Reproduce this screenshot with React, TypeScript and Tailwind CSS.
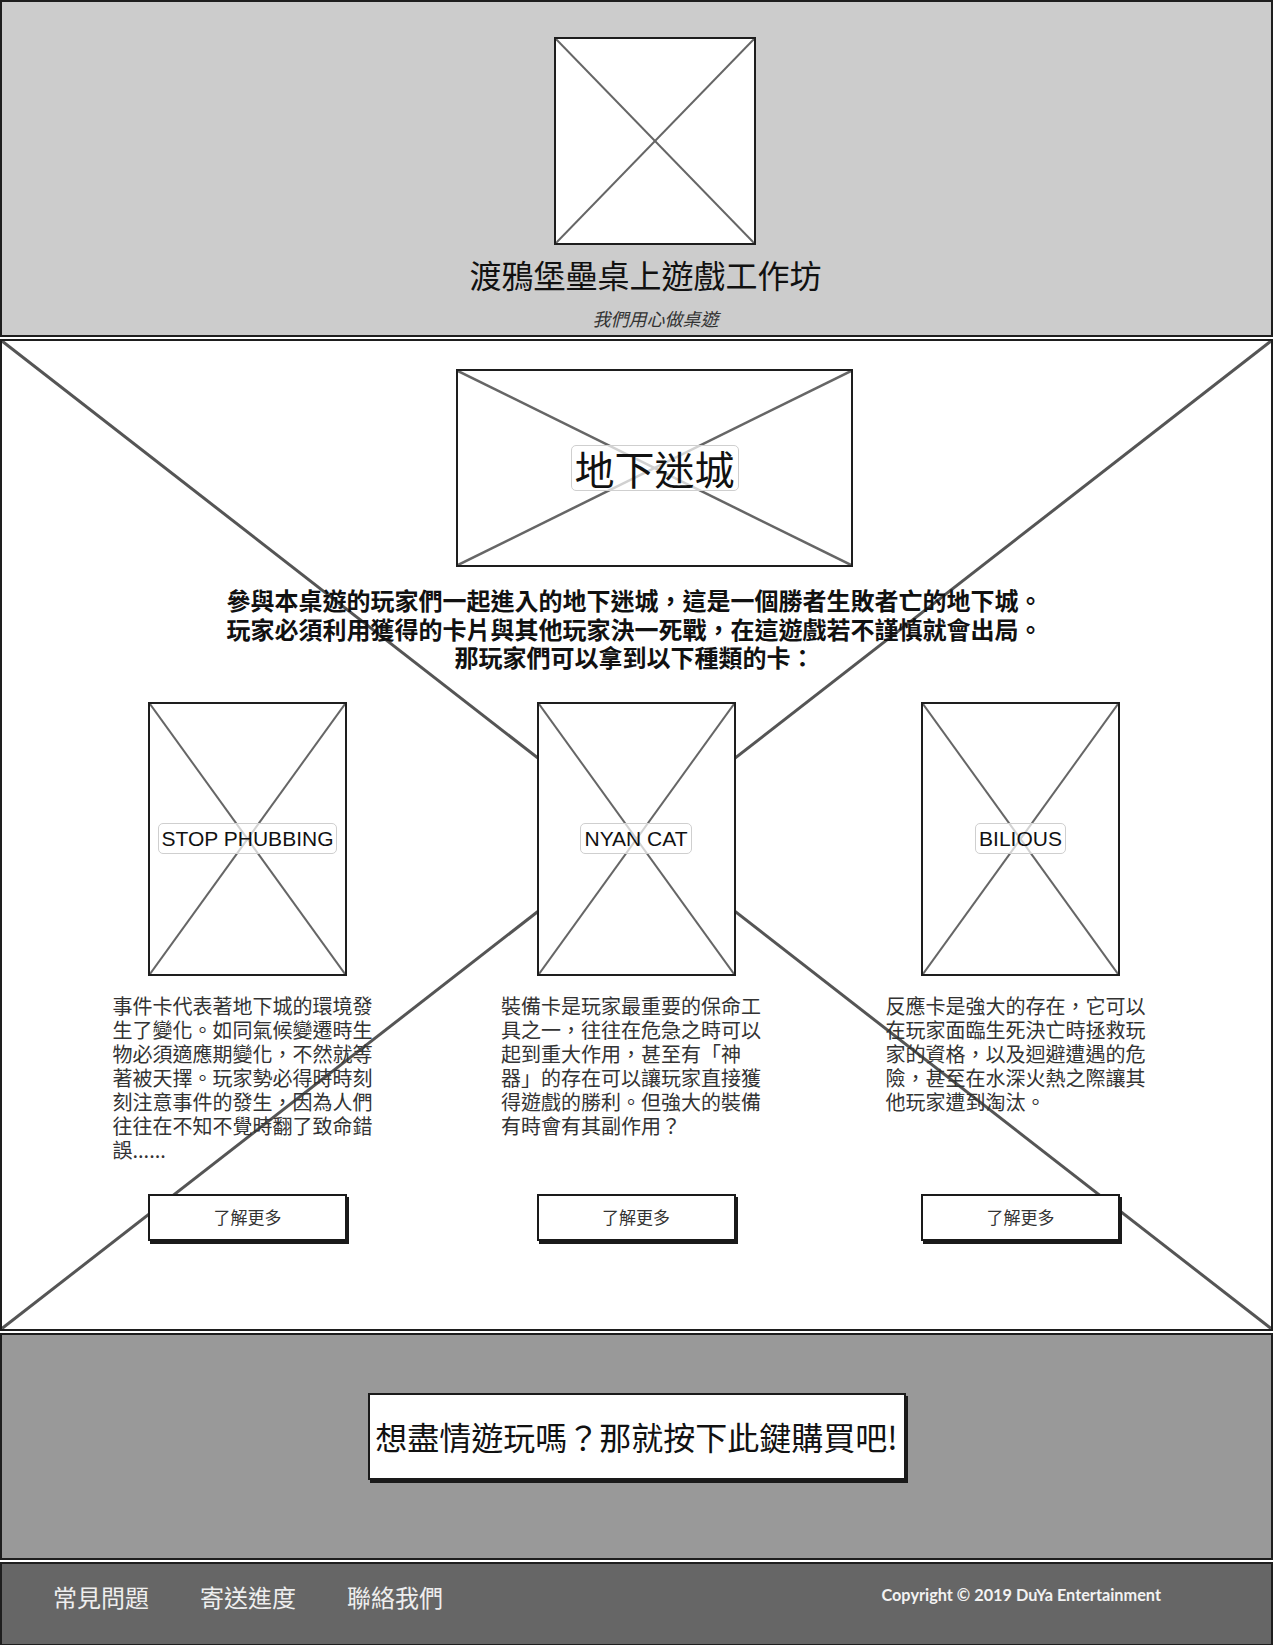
import React from "react";

const cjk = "font-['Noto_Sans_CJK_TC','Noto_Sans_CJK_SC',sans-serif]";

type Card = { label: string; lines: string[] };

const cards: Card[] = [
  {
    label: "STOP PHUBBING",
    lines: [
      "事件卡代表著地下城的環境發",
      "生了變化。如同氣候變遷時生",
      "物必須適應期變化，不然就等",
      "著被天擇。玩家勢必得時時刻",
      "刻注意事件的發生，因為人們",
      "往往在不知不覺時翻了致命錯",
      "誤......",
    ],
  },
  {
    label: "NYAN CAT",
    lines: [
      "裝備卡是玩家最重要的保命工",
      "具之一，往往在危急之時可以",
      "起到重大作用，甚至有「神",
      "器」的存在可以讓玩家直接獲",
      "得遊戲的勝利。但強大的裝備",
      "有時會有其副作用？",
    ],
  },
  {
    label: "BILIOUS",
    lines: [
      "反應卡是強大的存在，它可以",
      "在玩家面臨生死決亡時拯救玩",
      "家的資格，以及迴避遭遇的危",
      "險，甚至在水深火熱之際讓其",
      "他玩家遭到淘汰。",
    ],
  },
];

// wireframe "X" drawn across a box
const Cross = ({ color = "#666", width = 2 }: { color?: string; width?: number }) => (
  <svg
    className="pointer-events-none absolute inset-0 h-full w-full"
    viewBox="0 0 100 100"
    preserveAspectRatio="none"
  >
    <line x1="0" y1="0" x2="100" y2="100" stroke={color} strokeWidth={width} vectorEffect="non-scaling-stroke" />
    <line x1="100" y1="0" x2="0" y2="100" stroke={color} strokeWidth={width} vectorEffect="non-scaling-stroke" />
  </svg>
);

const Placeholder = ({
  className,
  children,
  stroke = 2,
}: {
  className: string;
  children?: React.ReactNode;
  stroke?: number;
}) => (
  <div className={`relative flex items-center justify-center border-2 border-[#1e1e1e] bg-white ${className}`}>
    <Cross width={stroke} />
    {children}
  </div>
);

export default function App() {
  return (
    <div className={`flex w-[1273px] flex-col gap-[2px] bg-white ${cjk}`}>
      {/* HEADER */}
      <header className="flex flex-col items-center border-2 border-[#1e1e1e] bg-[#cccccc] pt-[35px] pb-[6px]">
        <Placeholder className="ml-[36px] h-[208px] w-[202px]" stroke={2} />
        <h1 className="mt-[10px] ml-[18px] text-[32px] leading-[38px] font-normal text-[#111]">
          渡鴉堡壘桌上遊戲工作坊
        </h1>
        <p className="mt-[14px] ml-[38px] text-[18px] leading-[22px] italic text-[#333]">我們用心做桌遊</p>
      </header>

      {/* MAIN */}
      <main className="relative border-2 border-[#1e1e1e] bg-white pt-[28px] pb-[88px]">
        <Cross color="#555" width={3} />
        <div className="relative flex flex-col items-center">
          <Placeholder className="ml-[36px] h-[198px] w-[397px]" stroke={2.5}>
            <span className="relative rounded-[5px] border border-[#cfcfcf] bg-white/70 px-[3px] text-[40px] leading-[44px] text-[#111]">
              地下迷城
            </span>
          </Placeholder>
          <p className="mt-[19px] mr-[4px] text-center text-[24px] leading-[28.5px] font-bold text-[#111]">
            參與本桌遊的玩家們一起進入的地下迷城，這是一個勝者生敗者亡的地下城。
            <br />
            玩家必須利用獲得的卡片與其他玩家決一死戰，在這遊戲若不謹慎就會出局。
            <br />
            那玩家們可以拿到以下種類的卡：
          </p>
        </div>

        <div className="relative mt-[30px] ml-[50px] grid w-[1160px] grid-cols-[391px_386px_383px]">
          {cards.map((c) => (
            <div key={c.label} className="flex flex-col items-center">
              <Placeholder className="h-[274px] w-[199px]">
                <span className="relative rounded-[5px] border border-[#cfcfcf] bg-white/70 px-[3px] font-['Liberation_Sans',sans-serif] text-[21px] leading-[29px] text-[#111]">
                  {c.label}
                </span>
              </Placeholder>
              <p className="mt-[18px] mr-[10px] h-[200px] w-[260px] text-[20px] leading-[24px] text-[#333]">
                {c.lines.map((l, i) => (
                  <React.Fragment key={i}>
                    {l}
                    {i < c.lines.length - 1 && <br />}
                  </React.Fragment>
                ))}
              </p>
              <button className="h-[47px] w-[199px] border-2 border-[#1a1a1a] bg-white text-[17px] text-[#333] shadow-[2px_3px_0_#1a1a1a]">
                了解更多
              </button>
            </div>
          ))}
        </div>
      </main>

      {/* BUY */}
      <section className="flex justify-center border-2 border-[#1e1e1e] bg-[#999999] pt-[58px] pb-[78px]">
        <button className="h-[87px] w-[538px] border-2 border-[#1a1a1a] bg-white text-[32px] text-[#111] shadow-[2px_3px_0_#1a1a1a]">
          想盡情遊玩嗎？那就按下此鍵購買吧!
        </button>
      </section>

      {/* FOOTER */}
      <footer className="flex items-start border-2 border-[#1e1e1e] bg-[#666666] pt-[18px] pb-[33px] pl-[51px]">
        <nav className="flex gap-[51px] text-[24px] leading-[29px] text-[#eeeeee]">
          <a>常見問題</a>
          <a>寄送進度</a>
          <a>聯絡我們</a>
        </nav>
        <span className="mt-[3px] mr-[110px] ml-auto font-['Lato',sans-serif] text-[16.3px] leading-[20px] font-bold text-[#f2f2f2]">
          Copyright © 2019 DuYa Entertainment
        </span>
      </footer>
    </div>
  );
}
